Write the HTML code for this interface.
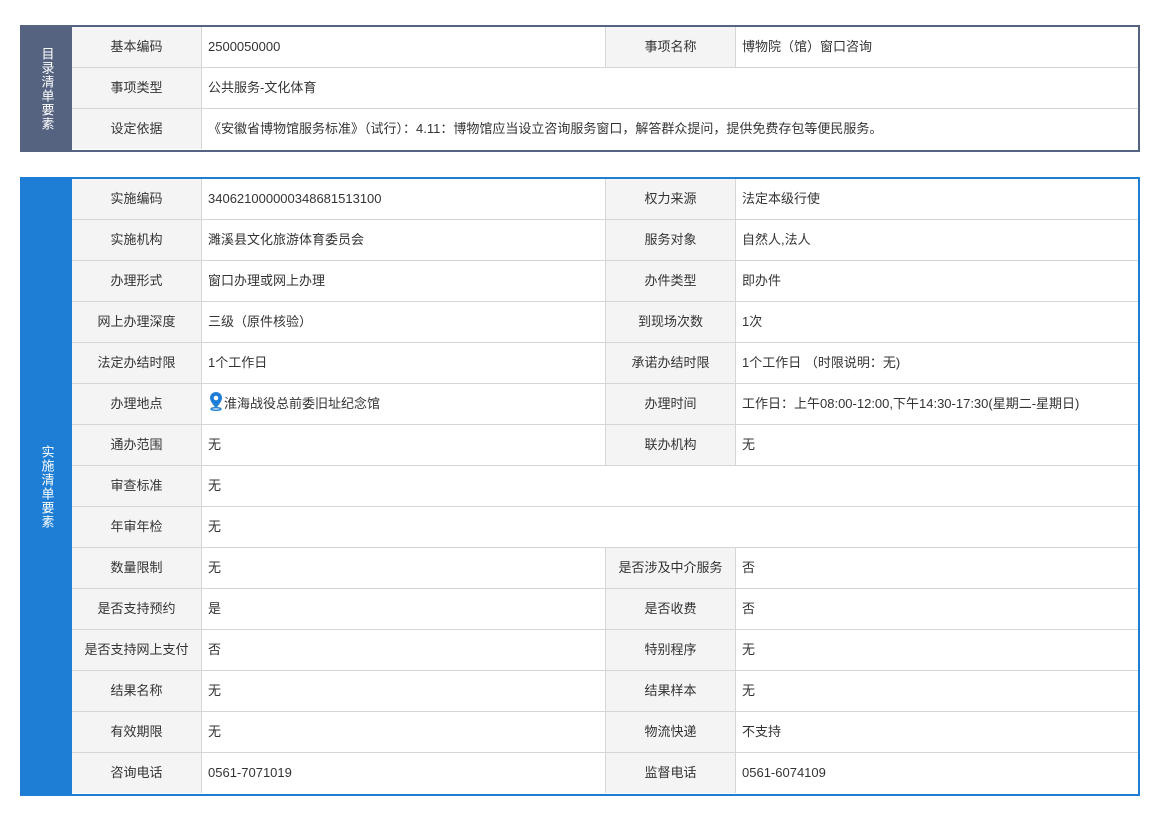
<!DOCTYPE html>
<html><head><meta charset="utf-8"><style>
body{margin:0;background:#fff;width:1155px;height:815px;position:relative;font-family:"Liberation Sans","Noto Sans CJK SC",sans-serif;font-size:13px;color:#333}
.t{position:absolute;left:20px;width:1116px;box-sizing:content-box}
.t1{top:25px;height:123px;border:2px solid #556380}
.t2{top:177px;height:615px;border:2px solid #1e7dd4}
.side{position:absolute;left:0;top:0;bottom:0;width:50px;color:#fff;display:flex;align-items:center;justify-content:center;writing-mode:vertical-rl;font-size:13px;letter-spacing:1px}
.t1 .side{background:#556380}
.t2 .side{background:#1e7dd4}
.row{position:absolute;left:50px;right:0;height:40px;border-bottom:1px solid #d6d6d6;background:#fff}
.row:last-child{border-bottom:none}
.c{position:absolute;top:0;height:40px;line-height:40px;box-sizing:border-box}
.l{background:#f4f4f4;text-align:center;width:130px;border-right:1px solid #d6d6d6}
.l1{left:0}.v1{left:130px;width:404px;padding-left:6px;border-right:1px solid #d6d6d6}
.l2{left:534px}.v2{left:664px;width:402px;padding-left:6px}
.vw{left:130px;right:0;padding-left:6px}
.v1.nb{border-right:none}
</style></head><body>
<div class="t t1"><div class="side">目录清单要素</div>
<div class="row" style="top:0"><div class="c l l1">基本编码</div><div class="c v1">2500050000</div><div class="c l l2">事项名称</div><div class="c v2">博物院（馆）窗口咨询</div></div>
<div class="row" style="top:41px"><div class="c l l1">事项类型</div><div class="c vw">公共服务-文化体育</div></div>
<div class="row" style="top:82px;border-bottom:none"><div class="c l l1">设定依据</div><div class="c vw">《安徽省博物馆服务标准》（试行）：4.11：博物馆应当设立咨询服务窗口，解答群众提问，提供免费存包等便民服务。</div></div>
</div>
<div class="t t2"><div class="side">实施清单要素</div>
<div class="row" style="top:0"><div class="c l l1">实施编码</div><div class="c v1">340621000000348681513100</div><div class="c l l2">权力来源</div><div class="c v2">法定本级行使</div></div>
<div class="row" style="top:41px"><div class="c l l1">实施机构</div><div class="c v1">濉溪县文化旅游体育委员会</div><div class="c l l2">服务对象</div><div class="c v2">自然人,法人</div></div>
<div class="row" style="top:82px"><div class="c l l1">办理形式</div><div class="c v1">窗口办理或网上办理</div><div class="c l l2">办件类型</div><div class="c v2">即办件</div></div>
<div class="row" style="top:123px"><div class="c l l1">网上办理深度</div><div class="c v1">三级（原件核验）</div><div class="c l l2">到现场次数</div><div class="c v2">1次</div></div>
<div class="row" style="top:164px"><div class="c l l1">法定办结时限</div><div class="c v1">1个工作日</div><div class="c l l2">承诺办结时限</div><div class="c v2">1个工作日 （时限说明：无)</div></div>
<div class="row" style="top:205px"><div class="c l l1">办理地点</div><div class="c v1"><svg width="16" height="20" viewBox="0 0 16 20" style="vertical-align:-3px"><path d="M8 1a6 6 0 0 0-6 6c0 4 6 10 6 10s6-6 6-10a6 6 0 0 0-6-6z" fill="#1e7dd4"/><circle cx="8" cy="7" r="2.3" fill="#fff"/><ellipse cx="8" cy="18" rx="5" ry="1.3" fill="none" stroke="#1e7dd4" stroke-width="1.3"/></svg>淮海战役总前委旧址纪念馆</div><div class="c l l2">办理时间</div><div class="c v2">工作日：上午08:00-12:00,下午14:30-17:30(星期二-星期日)</div></div>
<div class="row" style="top:246px"><div class="c l l1">通办范围</div><div class="c v1">无</div><div class="c l l2">联办机构</div><div class="c v2">无</div></div>
<div class="row" style="top:287px"><div class="c l l1">审查标准</div><div class="c vw">无</div></div>
<div class="row" style="top:328px"><div class="c l l1">年审年检</div><div class="c vw">无</div></div>
<div class="row" style="top:369px"><div class="c l l1">数量限制</div><div class="c v1">无</div><div class="c l l2">是否涉及中介服务</div><div class="c v2">否</div></div>
<div class="row" style="top:410px"><div class="c l l1">是否支持预约</div><div class="c v1">是</div><div class="c l l2">是否收费</div><div class="c v2">否</div></div>
<div class="row" style="top:451px"><div class="c l l1">是否支持网上支付</div><div class="c v1">否</div><div class="c l l2">特别程序</div><div class="c v2">无</div></div>
<div class="row" style="top:492px"><div class="c l l1">结果名称</div><div class="c v1">无</div><div class="c l l2">结果样本</div><div class="c v2">无</div></div>
<div class="row" style="top:533px"><div class="c l l1">有效期限</div><div class="c v1">无</div><div class="c l l2">物流快递</div><div class="c v2">不支持</div></div>
<div class="row" style="top:574px;border-bottom:none"><div class="c l l1">咨询电话</div><div class="c v1">0561-7071019</div><div class="c l l2">监督电话</div><div class="c v2">0561-6074109</div></div>
</div>
</body></html>
